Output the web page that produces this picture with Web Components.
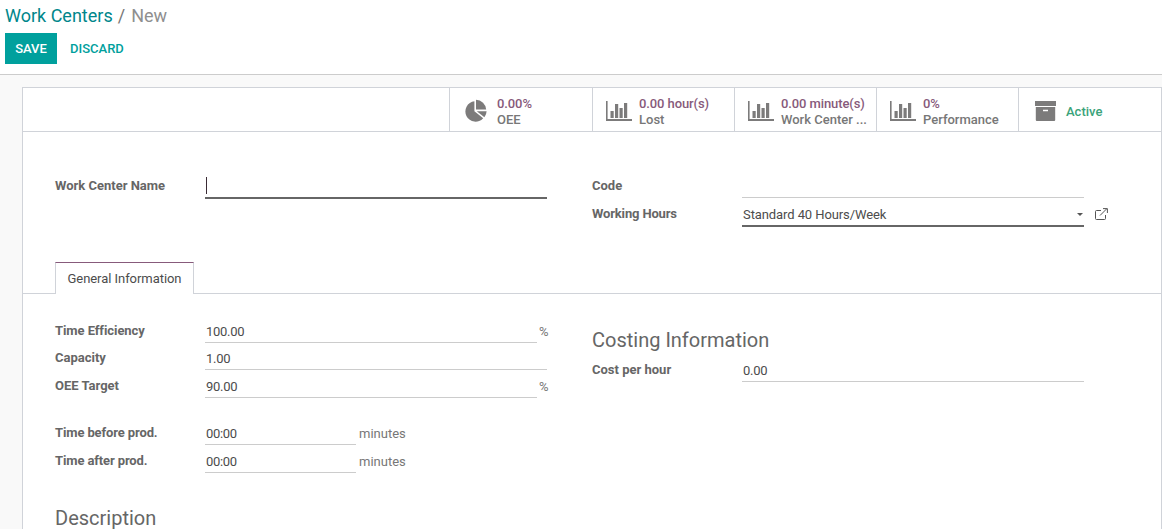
<!DOCTYPE html>
<html><head><meta charset="utf-8">
<style>
html,body{margin:0;padding:0;height:529px;overflow:hidden;background:#f9f9f9;font:13px/18px Roboto,sans-serif;color:#4c4c4c}
</style></head><body>
<o-panel></o-panel>
<o-sheet>
  <o-stats slot="stats">
    <o-stat class="first" value="0.00%" label="OEE" icon="pie"></o-stat>
    <o-stat value="0.00 hour(s)" label="Lost" icon="bars"></o-stat>
    <o-stat value="0.00 minute(s)" label="Work Center ..." icon="bars"></o-stat>
    <o-stat value="0%" label="Performance" icon="bars"></o-stat>
    <o-stat active label="Active" icon="box"></o-stat>
  </o-stats>
  <o-head slot="head"></o-head>
  <o-tabs slot="tabs"></o-tabs>
  <o-general slot="body"></o-general>
</o-sheet>
<script>
function def(name, css, html){
  customElements.define(name, class extends HTMLElement{
    constructor(){super();const r=this.attachShadow({mode:'open'});
      r.innerHTML='<style>'+css+'</style>'+(typeof html==='function'?'':html);}
    connectedCallback(){
      if(typeof html==='function')this.shadowRoot.innerHTML='<style>'+css+'</style>'+html(this);
    }
  });
}
const ICONS={
 pie:`<svg width="24" height="24" viewBox="0 0 24 24"><path fill="#7c7b7b" d="M10.4 2.3A10.2 10.2 0 1 0 19.2 19.2L10.4 12.3Z"/><path fill="#7c7b7b" d="M12 .8A10.4 10.4 0 0 1 22.2 10.6H12Z"/><path fill="#7c7b7b" d="M12.8 12.2H22.6A10.4 10.4 0 0 1 20.4 18.2Z"/></svg>`,
 bars:`<svg width="26" height="20" viewBox="0 0 26 20"><path fill="#7c7b7b" d="M0 0H1.6V18H26V20H0Z"/><rect x="4.5" y="10" width="3.2" height="7" fill="#7c7b7b"/><rect x="9" y="3" width="3.2" height="14" fill="#7c7b7b"/><rect x="13.5" y="7" width="3.2" height="10" fill="#7c7b7b"/><rect x="18" y="2" width="3.2" height="15" fill="#7c7b7b"/></svg>`,
 box:`<svg width="21" height="20" viewBox="0 0 21 20"><rect x="0" y="0" width="21" height="5" fill="#7c7b7b"/><path fill="#7c7b7b" d="M.8 6H20.2V19a1 1 0 0 1-1 1H1.8a1 1 0 0 1-1-1ZM8 8.7V10.3H13V8.7Z" fill-rule="evenodd"/></svg>`
};
def('o-panel',`
 :host{display:block;height:74px;background:#fff;border-bottom:1px solid #ccc}
 .crumb{padding:5px 0 0 5px;font-size:18px;line-height:22px;color:#8f8f8f;display:flex;gap:5px}
 .crumb a{color:#00868b;}
 .crumb i{font-style:normal;color:#777;}
 .crumb span{margin-left:1px}
 .btns{display:flex;margin:6px 0 0 5px;align-items:stretch}
 .save{background:#00a09d;color:#fff;font-weight:500;font-size:13px;width:52px;height:31px;display:flex;align-items:center;justify-content:center}
 .disc{color:#00a09d;font-weight:500;font-size:13px;margin-left:13px;display:flex;align-items:center}
`,`<div class="crumb"><a>Work Centers</a><i>/</i><span>New</span></div>
<div class="btns"><div class="save">SAVE</div><div class="disc">DISCARD</div></div>`);

def('o-sheet',`
 :host{display:block;margin:12px 0 0 22px;background:#fff;border:1px solid #d0d3d9;border-bottom:0;height:460px}
`,`<slot name="stats"></slot><slot name="head"></slot><slot name="tabs"></slot><slot name="body"></slot>`);

def('o-stats',`
 :host{display:flex;padding-left:426px;height:43px;border-bottom:1px solid #d0d3d9}
`,`<slot></slot>`);

def('o-stat',`
 :host{display:flex;box-sizing:border-box;width:142px;height:43px;border-left:1px solid #d0d3d9;align-items:center;padding:4px 0 0 13px;line-height:16px;font-size:13px;font-weight:500;white-space:nowrap}
 :host(.first){width:143px;padding-left:14px}
 .ic{width:33px;height:24px;display:flex;align-items:center;flex:none;margin-top:-1px}
 .v{color:#875a7b;letter-spacing:-.1px}
 .l{color:#777}
 .a{color:#3aa37a}
`,(h)=>{
  const icon=ICONS[h.getAttribute('icon')]||'';
  if(h.hasAttribute('active'))return `<div class="ic" style="width:31px;margin-left:3px">${icon}</div><div class="a">${h.getAttribute('label')}</div>`;
  return `<div class="ic">${icon}</div><div><div class="v">${h.getAttribute('value')}</div><div class="l">${h.getAttribute('label')}</div></div>`;
});

def('o-row',`
 :host{display:flex;align-items:flex-start;height:var(--h,28px);position:relative}
 .lb{width:150px;flex:none;font-weight:700;color:#666;line-height:18px;padding-top:var(--lt,0px);white-space:nowrap;letter-spacing:var(--lls,0)}
 .f{box-sizing:border-box;width:var(--w,342px);height:var(--fh,22px);border-bottom:var(--b,1px) solid var(--c,#ccc);padding:var(--fp,4px) 0 0 1px;line-height:18px;color:#4c4c4c;flex:none;display:flex;justify-content:space-between;position:relative;letter-spacing:var(--ls,0)}
 .u{color:#777;margin-left:var(--um,3px);line-height:18px;padding-top:var(--ut,1px)}
 .caret{position:absolute;right:1px;top:11px;width:0;height:0;border:3px solid transparent;border-top:3px solid #555;border-bottom:0}
 .cur{display:inline-block;width:1px;height:17px;background:#3a2b35;margin-top:-2px}
 .ext{position:absolute;left:503px;top:6px}
`,(h)=>{
  const a=n=>h.getAttribute(n);
  return `<div class="lb">${a('label')}</div><div class="f">${h.hasAttribute('cursor')?'<span class="cur"></span>':''}<span>${a('value')||''}</span>${h.hasAttribute('select')?'<span class="caret"></span>':''}</div>${a('unit')?`<div class="u">${a('unit')}</div>`:''}${h.hasAttribute('ext')?`<svg class="ext" width="13" height="12" viewBox="0 0 13 12" fill="none" stroke="#555" stroke-width="1"><path d="M10.5 7V10.5a1 1 0 0 1-1 1H1.5a1 1 0 0 1-1-1V3.5a1 1 0 0 1 1-1H6"/><path d="M5 7.5 11.5 1M8 .6H12.4V5"/></svg>`:''}`;
});

def('o-head',`
 :host{display:grid;grid-template-columns:537px 1fr;padding:43px 0 0 32px;height:87px}
 .l o-row{--w:342px;--b:2px;--c:#666;--fh:24px;--lt:2px}
 .r o-row.code{--w:342px;--fh:23px;--h:27px;--lt:2px}
 .r o-row.wh{--w:342px;--b:2px;--c:#666;--fh:25px;--lt:3px;--ls:-.09px;--lls:-.15px}
`,`<div class="l"><o-row label="Work Center Name" cursor></o-row></div>
<div class="r"><o-row class="code" label="Code"></o-row><o-row class="wh" label="Working Hours" value="Standard 40 Hours/Week" select ext></o-row></div>`);

def('o-tabs',`
 :host{display:block;height:31px;border-bottom:1px solid #d0d3d9;padding-left:32px}
 .t{box-sizing:border-box;width:139px;height:32px;border:1px solid #d0d3d9;border-top:1px solid #875a7b;border-bottom:0;background:#fff;color:#4c4c4c;display:flex;align-items:center;justify-content:center;font-size:13px;letter-spacing:-.05px}
`,`<div class="t">General Information</div>`);

def('o-general',`
 :host{display:grid;grid-template-columns:537px 1fr;padding:28px 0 0 32px}
 h2{font-weight:400;font-size:20px;line-height:24px;color:#666;margin:0}
 .gap{height:19px}
 .s{--w:332px;--um:2px}
 .c{--w:342px}
 .t{--w:151px;--um:3px;--lls:-.12px}
 .te{--lls:-.07px}
 o-row{--fh:21px;--fp:1px;--ls:-.3px}
 .r1{--h:27px}
 .cost{margin-top:6px}
 .cost h2{margin-bottom:9px}
 .desc{margin-top:26px}
`,`<div>
 <o-row class="s r1 te" label="Time Efficiency" value="100.00" unit="%"></o-row>
 <o-row class="c" label="Capacity" value="1.00"></o-row>
 <o-row class="s" label="OEE Target" value="90.00" unit="%"></o-row>
 <div class="gap"></div>
 <o-row class="t" label="Time before prod." value="00:00" unit="minutes"></o-row>
 <o-row class="t" label="Time after prod." value="00:00" unit="minutes"></o-row>
 <h2 class="desc">Description</h2>
</div>
<div class="cost"><h2>Costing Information</h2>
 <o-row class="c" label="Cost per hour" value="0.00"></o-row>
</div>`);
</script>
</body></html>
